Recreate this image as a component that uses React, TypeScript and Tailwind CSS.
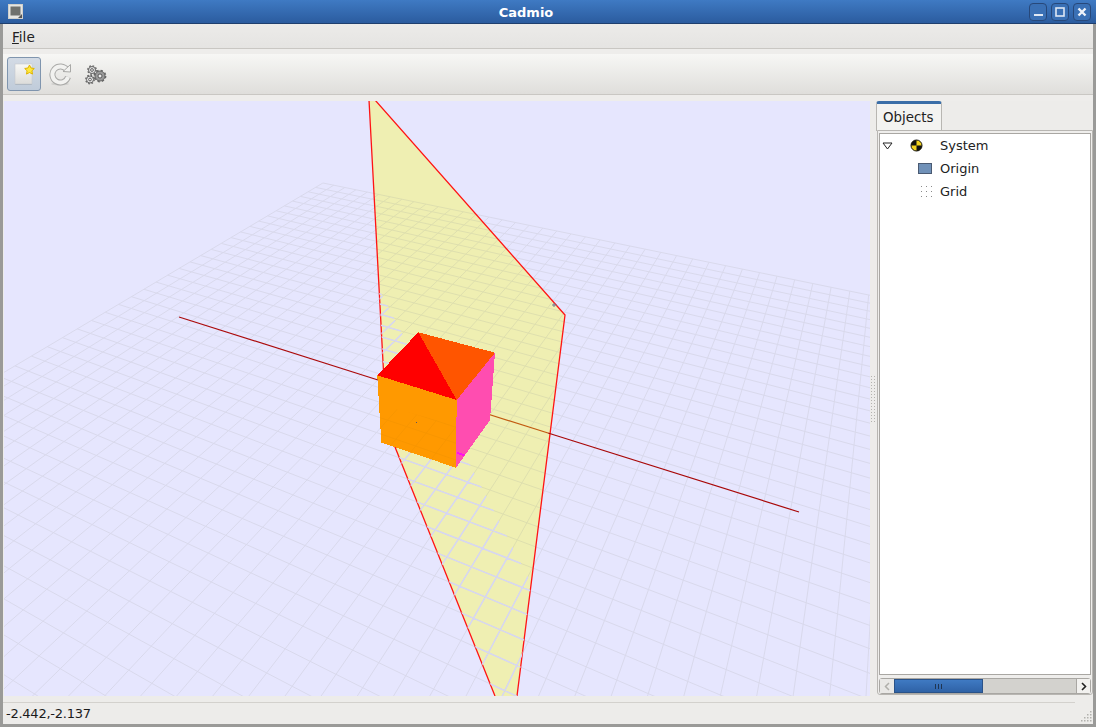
import React from 'react'

// perspective grid, worked out from the two vanishing points of the floor
const VP1 = { x: -1314, y: -153 }
const VP2 = { x: 914, y: -168 }

const gridPath = () => {
    let d = ''
    for (let u = 0; u <= 60; u++) {
        const dist = 1 / (6.109e-4 - u * 4.02e-6)
        const x = VP1.x + dist
        const y = VP1.y + dist * (336 / 1637)
        d += `M${x.toFixed(1)} ${y.toFixed(1)}L${(x + (x - VP2.x) * 3).toFixed(1)} ${(y + (y - VP2.y) * 3).toFixed(1)}`
    }
    for (let v = 0; v <= 60; v++) {
        const dist = 1 / (1.692e-3 - v * 2.07e-5)
        const x = VP2.x - dist
        const y = VP2.y + dist * (351 / 591)
        d += `M${x.toFixed(1)} ${y.toFixed(1)}L${(x + (x - VP1.x) * 3).toFixed(1)} ${(y + (y - VP1.y) * 3).toFixed(1)}`
    }
    return d
}

const PLANE = '369,100 375,100 565,315 517,696 495,696 386.4,425.6'
const PLANE_FRONT = '379,289 531.2,583 517,696 495,696 386.4,425.6'
const CUBE_LOW = '380,405 456,425 456,468 381,443'

const Viewport = () => {
    const grid = gridPath()
    return (
        <svg viewBox="4 101 866 595" width={866} height={595} className="block shrink-0">
            <defs>
                <clipPath id="plane"><polygon points={PLANE} /></clipPath>
                <clipPath id="front"><polygon points={PLANE_FRONT} /></clipPath>
                <clipPath id="cubelow"><polygon points={CUBE_LOW} /></clipPath>
            </defs>
            <rect x={4} y={101} width={866} height={595} fill="#e6e6fe" />
            <path d={grid} fill="none" stroke="#d9d9ec" strokeWidth={1} />
            <polygon points={PLANE} fill="#efefb2" />
            <path d={grid} fill="none" stroke="#dedfae" strokeWidth={1} clipPath="url(#plane)" />
            <g fill="none" stroke="#ff1414" strokeWidth={1.3}>
                <path d="M369 100L386.4 425.6L495 696" />
                <path d="M375 100L565 315L517 696" />
            </g>
            <path d={grid} fill="none" stroke="#d6d6f3" strokeWidth={1.5} clipPath="url(#front)" />
            <path d="M179 317L378 380" stroke="#ab0b0b" strokeWidth={1.2} />
            <path d="M475 410L548 433" stroke="#c25a10" strokeWidth={1.2} />
            <path d="M548 433L799 512" stroke="#a80808" strokeWidth={1.2} />
            <g shapeRendering="crispEdges">
                <polygon points="377.3,375.3 456.7,400 456,467.7 381.3,442.7" fill="#ff9900" />
                <polygon points="456.7,400 495,352.7 490,420 456,467.7" fill="#ff4db0" />
                <polygon points="377.3,375.3 418.3,332.3 456.7,400" fill="#ff0000" />
                <polygon points="418.3,332.3 495,352.7 456.7,400" fill="#ff5500" />
                <polygon points="457,452 465,454.5 464,456 457,454" fill="#ff10ee" />
            </g>
            <path d={grid} fill="none" stroke="#f89600" strokeWidth={1} clipPath="url(#cubelow)" />
            <path d="M552 305H557M554 303V307" stroke="#6f7890" strokeWidth={1} />
            <rect x={416} y={422} width={1} height={1} fill="#556" />
        </svg>
    )
}

const Gear = ({ cx, cy, r, fill }: { cx: number; cy: number; r: number; fill: string }) => {
    const teeth = 2 * Math.PI * r / 16
    return (
        <g>
            <circle cx={cx} cy={cy} r={r} fill="none" stroke="#666" strokeWidth={2.8} strokeDasharray={`${teeth} ${teeth}`} />
            <circle cx={cx} cy={cy} r={r} fill={fill} stroke="#666" strokeWidth={1} />
            <circle cx={cx} cy={cy} r={r * 0.4} fill="#eee" stroke="#444" strokeWidth={0.8} />
        </g>
    )
}

const Toolbar = () => (
    <div className="flex h-[41px] items-center gap-[8px] border-b border-[#c9c7c3] bg-gradient-to-b from-[#f7f7f5] to-[#dfdedb] pl-[4px]">
        <div className="flex h-[34px] w-[34px] items-center justify-center rounded-[3px] border border-[#7f95ae] bg-gradient-to-b from-[#d3dbe5] to-[#c0ccda]">
            <svg width="24" height="24" viewBox="0 0 24 24">
                <defs>
                    <linearGradient id="page" x1="0" y1="0" x2="0" y2="1">
                        <stop offset="0" stopColor="#f8f8f6" />
                        <stop offset="1" stopColor="#dcdcda" />
                    </linearGradient>
                </defs>
                <rect x="3" y="3" width="17" height="20" rx="1" fill="#8a95a3" opacity="0.5" />
                <rect x="3" y="2" width="17" height="20" fill="url(#page)" stroke="#c5c8cc" strokeWidth="0.6" />
                <path d="M17.5 3l1.5 3 3.3.5-2.4 2.3.6 3.3-3-1.6-3 1.6.6-3.3-2.4-2.3 3.3-.5z" fill="#ffe93c" stroke="#e0b400" strokeWidth="1" />
            </svg>
        </div>
        <svg width="24" height="24" viewBox="0 0 24 24">
            <ellipse cx="11" cy="22" rx="9" ry="1.5" fill="#cfcfcc" />
            <path d="M18 8A8 8 0 1 0 19 15" fill="none" stroke="#a9a9a7" strokeWidth="6" />
            <path d="M18 8A8 8 0 1 0 19 15" fill="none" stroke="#f2f2f0" strokeWidth="4" />
            <path d="M14 9.5L21.5 10L21.5 2.5Z" fill="#f2f2f0" stroke="#a9a9a7" strokeWidth="1" />
        </svg>
        <svg width="24" height="24" viewBox="0 0 24 24" className="ml-[3px]">
            <Gear cx={16} cy={14} r={5} fill="#9a9a9a" />
            <Gear cx={8} cy={8} r={3.5} fill="#e4e4e4" />
            <Gear cx={6} cy={17.5} r={3.5} fill="#e4e4e4" />
        </svg>
    </div>
)

const WinButton = ({ children }: { children: React.ReactNode }) => (
    <div className="flex h-[18px] w-[18px] items-center justify-center rounded-[4px] border border-[#27487a] bg-[#3a70b5]">
        <svg width="14" height="14" viewBox="0 0 14 14">{children}</svg>
    </div>
)

const TitleBar = () => (
    <div className="relative flex h-[24px] items-center border-b border-[#1f3f6e] bg-gradient-to-b from-[#3f7ac3] to-[#2b5c9f] pl-[8px] pr-[5px]">
        <svg width="15" height="15" viewBox="0 0 15 15">
            <rect x="0.5" y="0.5" width="14" height="14" fill="#e6e6e2" stroke="#d0d0cc" />
            <rect x="2.5" y="2.5" width="10" height="9" fill="#6f716e" />
            <path d="M10 14l4-4v4z" fill="#555" />
        </svg>
        <div className="flex-1 pt-[2px] text-center text-[13px] font-bold text-white">Cadmio</div>
        <div className="flex gap-[4px]">
            <WinButton><rect x="3" y="9" width="9" height="2" fill="#dfe8f4" /></WinButton>
            <WinButton><rect x="3" y="3" width="8" height="8" fill="none" stroke="#dfe8f4" strokeWidth="1.6" /></WinButton>
            <WinButton><path d="M3.5 3.5L10.5 10.5M10.5 3.5L3.5 10.5" stroke="#eef3fa" strokeWidth="2.4" /></WinButton>
        </div>
    </div>
)

const Splitter = () => (
    <div className="flex w-[7px] shrink-0 items-center justify-center">
        <svg width="5" height="46" viewBox="0 0 5 46">
            {Array.from({ length: 16 }).map((_, i) => (
                <g key={i} fill="#b4b3af">
                    <rect x="0" y={i * 3} width="1" height="1" />
                    <rect x="3" y={i * 3} width="1" height="1" />
                </g>
            ))}
        </svg>
    </div>
)

const TreeRow = ({ icon, label, arrow }: { icon: React.ReactNode; label: string; arrow?: boolean }) => (
    <div className="flex h-[23px] items-center">
        <div className="flex w-[13px] justify-end">
            {arrow && (
                <svg width="11" height="8" viewBox="0 0 11 8">
                    <path d="M1 1H10L5.5 7Z" fill="#fff" stroke="#222" strokeWidth="1" />
                </svg>
            )}
        </div>
        <div className="ml-[11px] flex w-[36px] justify-center pl-[8px]">{icon}</div>
        <span className="text-[13px] text-[#222]">{label}</span>
    </div>
)

const ObjectsPanel = () => (
    <div className="flex w-[216px] shrink-0 flex-col">
        <div className="flex">
            <div className="-ml-px h-[30px] w-[66px] rounded-t-[3px] border-x border-t-[3px] border-x-[#b8b6b2] border-t-[#3a6ea8] bg-[#f3f3f1] pl-[6px] pt-[4px] text-[13.4px] text-[#222]">
                Objects
            </div>
        </div>
        <div className="-mt-px flex h-[565px] flex-col rounded-b-[3px] border border-[#b8b6b2] bg-[#efeeec] px-[1px] pt-[2px]">
            <div className="h-[542px] border border-[#a9a7a3] bg-white">
                <TreeRow
                    arrow
                    label="System"
                    icon={
                        <svg width="13" height="13" viewBox="0 0 13 13" className="-translate-x-[10px]">
                            <circle cx="6.5" cy="6.5" r="5.5" fill="#f2d21f" stroke="#111" />
                            <path d="M6.5 1A5.5 5.5 0 0 0 1 6.5H6.5ZM6.5 6.5V12A5.5 5.5 0 0 0 12 6.5Z" fill="#111" />
                        </svg>
                    }
                />
                <TreeRow
                    label="Origin"
                    icon={<div className="h-[11px] w-[14px] -translate-x-[1px] border border-[#4a5a72] bg-[#7091b8]" />}
                />
                <TreeRow
                    label="Grid"
                    icon={
                        <svg width="13" height="11" viewBox="0 0 13 11">
                            {[0, 5, 10].map((y) =>
                                [1, 6, 11].map((x) => <rect key={`${x}-${y}`} x={x} y={y} width="1" height="1" fill="#8a8a8a" />),
                            )}
                        </svg>
                    }
                />
            </div>
            <div className="mt-[3px] flex h-[16px] rounded-[3px] border border-[#a9a7a3] bg-[#d3d2ce]">
                <div className="flex w-[14px] items-center justify-center bg-[#e9e8e6]">
                    <svg width="6" height="9" viewBox="0 0 6 9"><path d="M5 1L1.5 4.5L5 8" fill="none" stroke="#b0afab" strokeWidth="1.5" /></svg>
                </div>
                <div className="flex w-[89px] items-center justify-center gap-[2px] border border-[#2a5288] bg-gradient-to-b from-[#3f7ac3] to-[#2f62a6]">
                    <span className="h-[5px] w-px bg-[#1f3552]" />
                    <span className="h-[5px] w-px bg-[#1f3552]" />
                    <span className="h-[5px] w-px bg-[#1f3552]" />
                </div>
                <div className="flex-1" />
                <div className="flex w-[14px] items-center justify-center border-l border-[#a9a7a3] bg-[#f2f1ef]">
                    <svg width="6" height="9" viewBox="0 0 6 9"><path d="M1 1L4.5 4.5L1 8" fill="none" stroke="#222" strokeWidth="1.6" /></svg>
                </div>
            </div>
        </div>
    </div>
)

const StatusBar = () => (
    <div className="relative mt-[6px] h-[22px] pl-[3px] pt-[3px] text-[13px] leading-[17px] tracking-[-0.25px] text-[#1a1a1a]">
        <div className="absolute left-0 top-0 h-px w-[1072px] bg-[#d3d1cd]" />
        -2.442,-2.137
        <svg width="14" height="14" viewBox="0 0 14 14" className="absolute bottom-[1px] right-0">
            {[[11, 2], [8, 5], [11, 5], [5, 8], [8, 8], [11, 8], [2, 11], [5, 11], [8, 11], [11, 11]].map(([x, y]) => (
                <rect key={`${x}-${y}`} x={x} y={y} width="1.5" height="1.5" fill="#b2b1ad" />
            ))}
        </svg>
    </div>
)

export default function App() {
    return (
        <div className="flex h-[727px] w-[1096px] flex-col overflow-hidden bg-[#edecea] font-['DejaVu_Sans',sans-serif]">
            <TitleBar />
            <div className="flex h-[703px] flex-col border-x-[3px] border-b-[3px] border-[#9a9a98]">
                <div className="flex h-[25px] items-center border-b border-[#c9c7c3] bg-gradient-to-b from-[#ecebe9] to-[#e5e4e2] pl-[9px] pt-[2px] text-[13.6px] text-[#222]">
                    <span><span className="underline">F</span>ile</span>
                </div>
                <div className="h-[5px] bg-[#eeedeb]" />
                <Toolbar />
                <div className="h-[6px] bg-[#eeedeb]" />
                <div className="flex h-[595px] pl-[1px]">
                    <Viewport />
                    <Splitter />
                    <ObjectsPanel />
                </div>
                <StatusBar />
            </div>
        </div>
    )
}
